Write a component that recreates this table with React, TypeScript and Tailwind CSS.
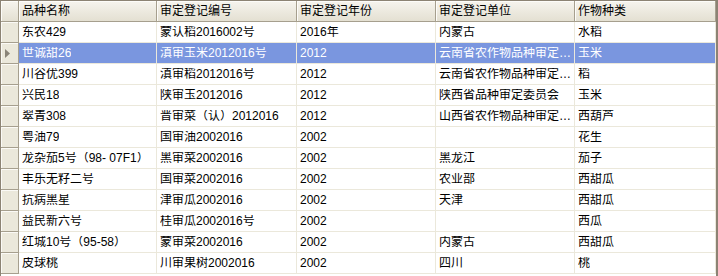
import React from "react";

type Row = [string, string, string, string, string];

const columns = ["品种名称", "审定登记编号", "审定登记年份", "审定登记单位", "作物种类"];

const rows: Row[] = [
	["东农429", "蒙认稻2016002号", "2016年", "内蒙古", "水稻"],
	["世诚甜26", "滇审玉米2012016号", "2012", "云南省农作物品种审定委员会", "玉米"],
	["川谷优399", "滇审稻2012016号", "2012", "云南省农作物品种审定委员会", "稻"],
	["兴民18", "陕审玉2012016", "2012", "陕西省品种审定委员会", "玉米"],
	["翠青308", "晋审菜（认）2012016", "2012", "山西省农作物品种审定委员会", "西葫芦"],
	["粤油79", "国审油2002016", "2002", "", "花生"],
	["龙杂茄5号（98- 07F1）", "黑审菜2002016", "2002", "黑龙江", "茄子"],
	["丰乐无籽二号", "国审菜2002016", "2002", "农业部", "西甜瓜"],
	["抗病黑星", "津审瓜2002016", "2002", "天津", "西甜瓜"],
	["益民新六号", "桂审瓜2002016号", "2002", "", "西瓜"],
	["红城10号（95-58）", "蒙审菜2002016", "2002", "内蒙古", "西甜瓜"],
	["皮球桃", "川审果树2002016", "2002", "四川", "桃"],
];

const selected = 1;

const gridCols = "grid grid-cols-[18px_138px_140px_139px_139px_141px]";

const RowHeader = ({ active }: { active?: boolean }) => (
	<div className="h-full border-r border-b border-[#a69f8e] bg-[#ebe8db] shadow-[inset_1px_1px_0_#fbfaf6] flex items-center pl-[4px]">
		{active && (
			<svg width="5" height="9" viewBox="0 0 5 9">
				<path d="M0 0 L5 4.5 L0 9 Z" fill="#8a8478" />
			</svg>
		)}
	</div>
);

export default function App() {
	return (
		<div
			className="w-[718px] h-[276px] overflow-hidden bg-white border-l border-t border-r-2 border-[#8c8374] text-[12px] text-black"
			style={{ fontFamily: '"Liberation Sans", "Noto Sans CJK SC", sans-serif' }}
		>
			<div className={`${gridCols} h-[21px] border-b border-[#a69f8e] bg-gradient-to-b from-[#f6f4ee] to-[#e4e0d2]`}>
				<div className="border-r border-[#a69f8e] shadow-[inset_1px_1px_0_#fdfcf9]" />
				{columns.map((c) => (
					<div
						key={c}
						className="border-r border-[#a69f8e] flex items-center pl-[3px] leading-none shadow-[inset_1px_1px_0_#fdfcf9]"
					>
						{c}
					</div>
				))}
			</div>
			{rows.map((r, i) => {
				const isSel = i === selected;
				return (
					<div key={i} className={`${gridCols} h-[21px]`}>
						<RowHeader active={isSel} />
						{r.map((v, j) => (
							<div
								key={j}
								className={`border-r border-b border-[#ebe8db] flex items-center pl-[3px] pr-[2px] min-w-0 ${
									isSel ? "bg-[#7a96df] text-white" : ""
								}`}
							>
								<span className="truncate leading-none">{v}</span>
							</div>
						))}
					</div>
				);
			})}
		</div>
	);
}
